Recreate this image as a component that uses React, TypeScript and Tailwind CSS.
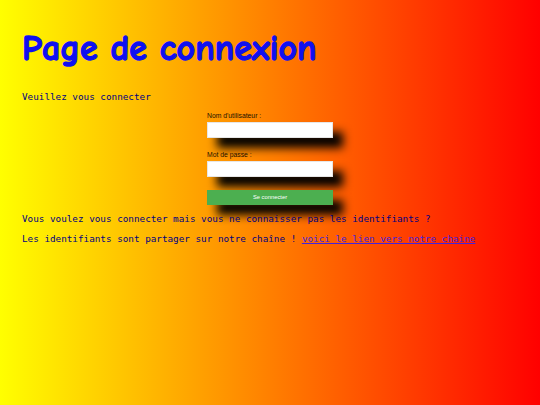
export default function App() {
  return (
    <div className="min-h-[405px] w-full bg-[linear-gradient(to_right,#ffff00,#ff0000)] px-[22px] pt-[29px]">
      <h1 className="text-[36px] font-bold leading-[40px] text-[#1010f0] [-webkit-text-stroke:1.3px_#1010f0] [font-family:'Comic_Sans_MS','Comic_Neue',cursive]">
        Page de connexion
      </h1>
      <p className="mt-[22px] text-[9.3px] leading-[12px] text-[#000080] [font-family:'DejaVu_Sans_Mono',monospace]">
        Veuillez vous connecter
      </p>
      <form className="mx-auto mt-[8px] flex w-[126px] flex-col [font-family:'Liberation_Sans',Arial,sans-serif]">
        <label className="text-[6.8px] leading-[9px] text-[#1a1000]">Nom d'utilisateur :</label>
        <input className="mt-[2px] h-[16px] w-full border border-[#e6e6e6] bg-white shadow-[10px_10px_10px_#000]" />
        <label className="mt-[12px] text-[6.8px] leading-[9px] text-[#1a1000]">Mot de passe :</label>
        <input type="password" className="mt-[2px] h-[16px] w-full border border-[#e6e6e6] bg-white shadow-[10px_10px_10px_#000]" />
        <button type="button" className="mt-[13px] h-[15px] w-full bg-[#4caf50] text-[5.8px] leading-[15px] text-white shadow-[10px_10px_10px_#000]">
          Se connecter
        </button>
      </form>
      <div className="mt-[8px] flex flex-col gap-[8px] text-[9.3px] leading-[12px] text-[#000080] [font-family:'DejaVu_Sans_Mono',monospace]">
        <p>Vous voulez vous connecter mais vous ne connaisser pas les identifiants ?</p>
        <p>
          Les identifiants sont partager sur notre chaîne !{" "}
          <a href="#" className="text-[#4422dd] underline">voici le lien vers notre chaine</a>
        </p>
      </div>
    </div>
  );
}
